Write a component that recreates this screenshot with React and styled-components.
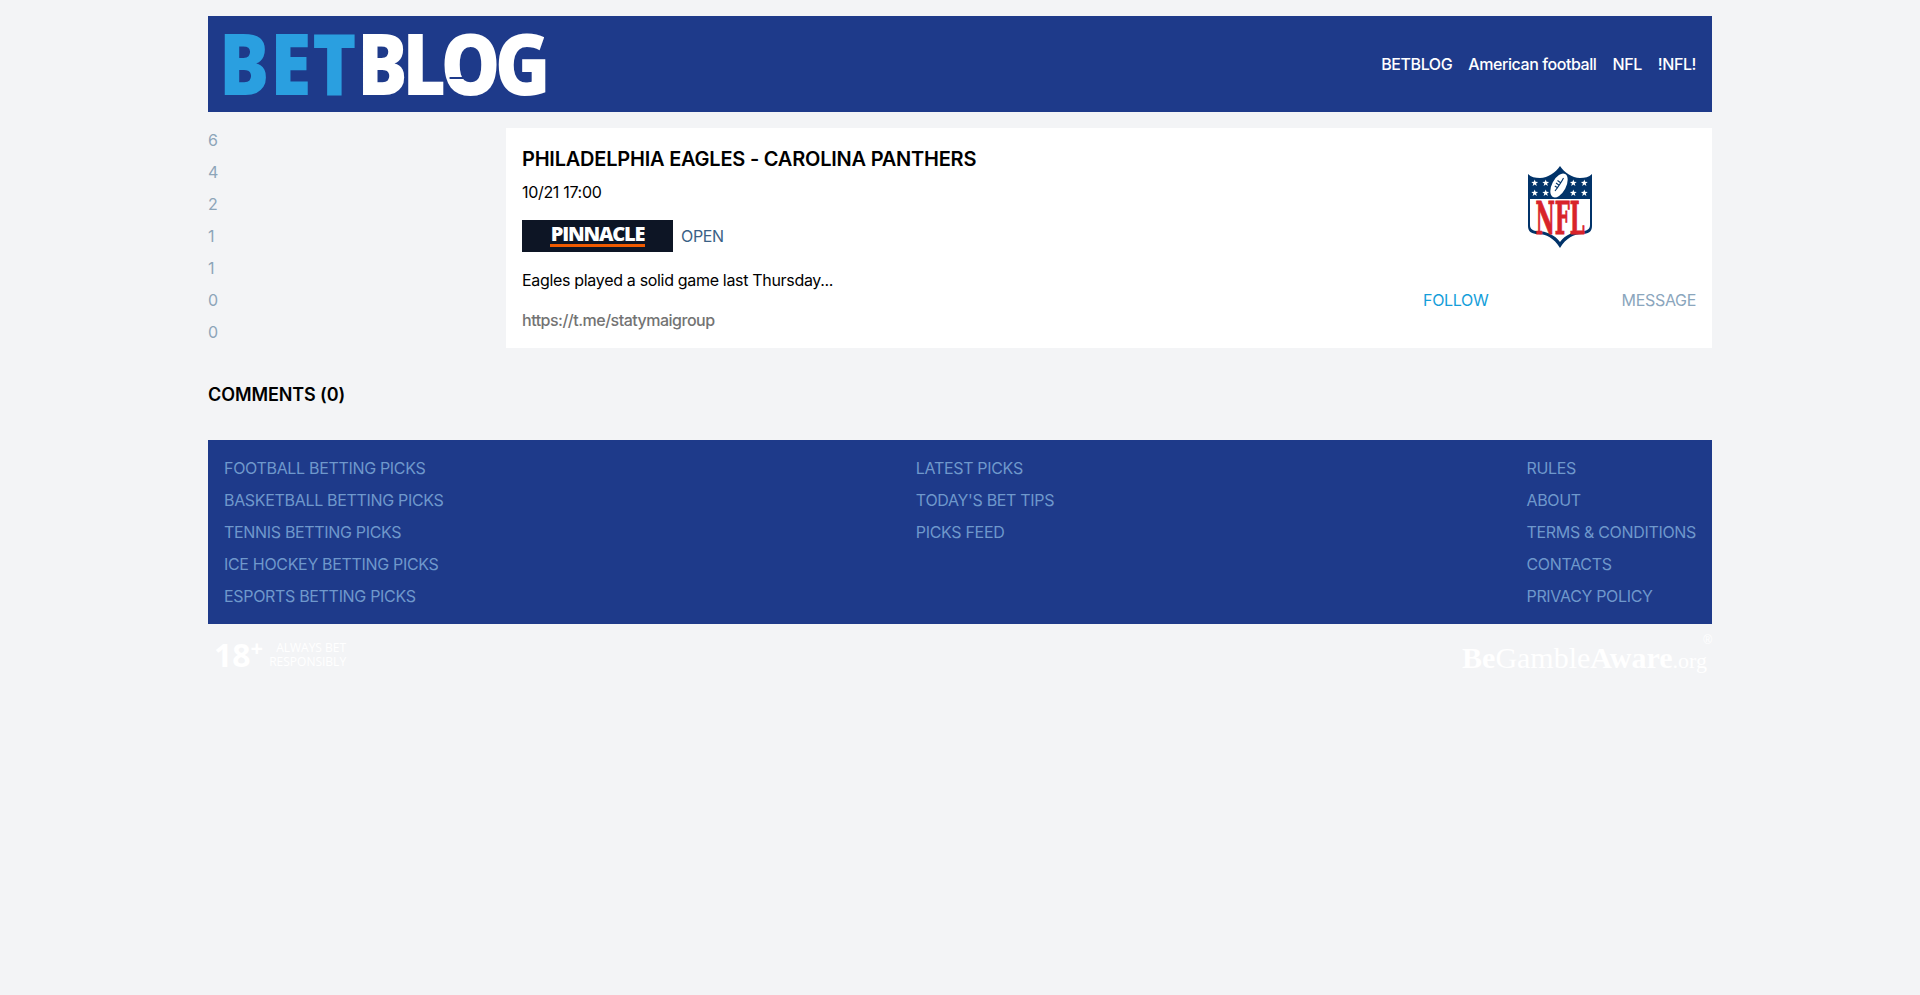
import styled, { createGlobalStyle } from 'styled-components';

const GlobalStyle = createGlobalStyle`
    * { box-sizing: border-box; }
    html, body { margin: 0; padding: 0; }
    body {
        background-color: #f3f4f6;
        color: #000;
        font-family: Inter, "Liberation Sans", sans-serif;
        font-size: 16px;
        line-height: 24px;
        letter-spacing: -0.32px;
    }
`

const stats = [6, 4, 2, 1, 1, 0, 0]
const navItems = ['BETBLOG', 'American football', 'NFL', '!NFL!']
const footerColumns = [
    ['FOOTBALL BETTING PICKS', 'BASKETBALL BETTING PICKS', 'TENNIS BETTING PICKS', 'ICE HOCKEY BETTING PICKS', 'ESPORTS BETTING PICKS'],
    ['LATEST PICKS', "TODAY'S BET TIPS", 'PICKS FEED'],
    ['RULES', 'ABOUT', 'TERMS & CONDITIONS', 'CONTACTS', 'PRIVACY POLICY'],
]
const starSpots = [[6.7, 17], [17.7, 17], [45.3, 17], [56.3, 17], [6.7, 27], [17.7, 27], [45.3, 27], [56.3, 27]]

const starPoints = (cx, cy, r) => {
    const pts = []
    for (let i = 0; i < 10; i++) {
        const rad = i % 2 === 0 ? r : r * 0.4
        const a = -Math.PI / 2 + (i * Math.PI) / 5
        pts.push(`${(cx + rad * Math.cos(a)).toFixed(2)},${(cy + rad * Math.sin(a)).toFixed(2)}`)
    }
    return pts.join(' ')
}

const NflLogo = () => (
    <svg width="64" height="82" viewBox="0 0 64 82">
        <path fill="#013369" d="M32 0C28 6 20 12 12 12C7 12 3 11 0 8V60C0 66 4 68 10 68C18 68 26 72 32 82C38 72 46 68 54 68C60 68 64 66 64 60V8C61 11 57 12 52 12C44 12 36 6 32 0Z" />
        <path fill="#fff" d="M2 33H62V59C62 63 59 65 54 65C46 65 37 69 32 76C27 69 18 65 10 65C5 65 2 63 2 59Z" />
        {starSpots.map(([x, y]) => <polygon key={`${x}-${y}`} fill="#fff" points={starPoints(x, y, 3.6)} />)}
        <ellipse cx="31" cy="19.5" rx="7" ry="13" fill="#fff" transform="rotate(28 31 19.5)" />
        <path d="M27 25C30 21 33 17 35.5 12M29.5 14.5L33 17M28 17L31.5 19.5M26.8 20L30 22" stroke="#013369" strokeWidth="1.1" fill="none" />
        <text transform="translate(32 68) scale(0.47 1)" fill="#d8232a" stroke="#d8232a" strokeWidth="1" fontFamily="'DejaVu Serif', serif" fontWeight="700" fontSize="45" textAnchor="middle" letterSpacing="0">NFL</text>
    </svg>
)

export default function App() {
    return (
        <>
            <GlobalStyle />
            <Page>
                <Header>
                    <Logo>
                        <LogoBet>BET</LogoBet><span>BLOG</span>
                        <LogoSlit />
                    </Logo>
                    <Nav>
                        {navItems.map(item => <NavLink key={item}>{item}</NavLink>)}
                    </Nav>
                </Header>
                <Main>
                    <Sidebar>
                        {stats.map((n, i) => <Stat key={i}>{n}</Stat>)}
                    </Sidebar>
                    <Card>
                        <CardBody>
                            <Title>PHILADELPHIA EAGLES - CAROLINA PANTHERS</Title>
                            <DateLine>10/21 17:00</DateLine>
                            <BookmakerRow>
                                <Pinnacle><PinnacleName>PINNACLE</PinnacleName></Pinnacle>
                                <OpenLink>OPEN</OpenLink>
                            </BookmakerRow>
                            <Teaser>Eagles played a solid game last Thursday...</Teaser>
                            <Url>https://t.me/statymaigroup</Url>
                        </CardBody>
                        <Author>
                            <AuthorLogo><NflLogo /></AuthorLogo>
                            <Actions>
                                <ActionLink $primary>FOLLOW</ActionLink>
                                <ActionLink>MESSAGE</ActionLink>
                            </Actions>
                        </Author>
                    </Card>
                </Main>
                <CommentsTitle>COMMENTS (0)</CommentsTitle>
                <Footer>
                    {footerColumns.map(col => (
                        <FooterColumn key={col[0]}>
                            {col.map(link => <FooterLink key={link}>{link}</FooterLink>)}
                        </FooterColumn>
                    ))}
                </Footer>
                <Badges>
                    <AgeBadge>
                        <AgeMark>18<sup>+</sup></AgeMark>
                        <AgeNote>ALWAYS BET<br />RESPONSIBLY</AgeNote>
                    </AgeBadge>
                    <Aware>
                        <b>Be</b>Gamble<b>Aware</b><AwareOrg>.org</AwareOrg>
                        <AwareMark>®</AwareMark>
                    </Aware>
                </Badges>
            </Page>
        </>
    )
}

const Page = styled.div`
    width: 1504px;
    margin: 0 auto;
    padding-top: 16px;
`

const Header = styled.header`
    height: 96px;
    padding: 0 16px;
    display: flex;
    align-items: center;
    justify-content: space-between;
    background-color: #1e3a8a;
`

const Logo = styled.div`
    position: relative;
    display: flex;
    margin: 0 0 4px -5px;
    color: #fff;
    font-family: "Open Sans", sans-serif;
    font-weight: 800;
    font-size: 85px;
    line-height: 96px;
    letter-spacing: -6px;
    transform: scaleX(0.88);
    transform-origin: left center;
`

const LogoBet = styled.span`
    color: #2a9fe0;
    letter-spacing: 1px;
`

const LogoSlit = styled.i`
    position: absolute;
    left: 262px;
    top: 63px;
    width: 16px;
    height: 2px;
    background-color: #1e3a8a;
`

const Nav = styled.nav`
    display: flex;
    gap: 16px;
`

const NavLink = styled.a`
    color: #fff;
    font-weight: 500;
    letter-spacing: -0.42px;
`

const Main = styled.main`
    display: flex;
    margin-top: 16px;
    align-items: flex-start;
`

const Sidebar = styled.aside`
    width: 298px;
    flex: none;
    margin-top: -4px;
`

const Stat = styled.div`
    height: 32px;
    line-height: 32px;
    color: #8da5b9;
`

const Card = styled.article`
    flex: 1;
    display: flex;
    justify-content: space-between;
    padding: 17px 16px 16px;
    background-color: #fff;
`

const CardBody = styled.div`
    display: flex;
    flex-direction: column;
`

const Title = styled.h1`
    margin: 0 0 7px;
    font-size: 20px;
    line-height: 28px;
    font-weight: 600;
    letter-spacing: -0.22px;
`

const DateLine = styled.div`
    margin-bottom: 16px;
`

const BookmakerRow = styled.div`
    display: flex;
    align-items: center;
    gap: 8px;
    margin-bottom: 16px;
`

const Pinnacle = styled.div`
    width: 151px;
    height: 32px;
    display: flex;
    justify-content: center;
    background-color: #0d1525;
`

const PinnacleName = styled.span`
    width: 95px;
    height: 23px;
    margin-top: 4px;
    border-bottom: 3px solid #f05a00;
    color: #fff;
    font-family: "Open Sans", sans-serif;
    font-size: 20px;
    font-weight: 800;
    line-height: 19px;
    letter-spacing: -1.2px;
    text-align: center;
`

const OpenLink = styled.a`
    color: #3b6186;
`

const Teaser = styled.p`
    margin: 0 0 16px;
`

const Url = styled.div`
    color: #737373;
    font-weight: 500;
    letter-spacing: -0.5px;
`

const Author = styled.div`
    width: 273px;
    display: flex;
    flex-direction: column;
    justify-content: space-between;
`

const AuthorLogo = styled.div`
    display: flex;
    justify-content: center;
    padding-top: 21px;

    svg { display: block; }
`

const Actions = styled.div`
    display: flex;
    justify-content: space-between;
    margin-bottom: 20px;
`

const ActionLink = styled.a`
    color: ${props => props.$primary ? '#149eda' : '#8ba6bd'};
`

const CommentsTitle = styled.h2`
    margin: 0;
    padding-top: 33px;
    height: 92px;
    font-size: 18px;
    line-height: 28px;
    font-weight: 600;
    letter-spacing: -0.1px;
`

const Footer = styled.footer`
    display: flex;
    justify-content: space-between;
    padding: 12px 16px;
    background-color: #1e3a8a;
`

const FooterColumn = styled.div`
    display: flex;
    flex-direction: column;
`

const FooterLink = styled.a`
    height: 32px;
    line-height: 32px;
    color: #6f98cc;
`

const Badges = styled.div`
    display: flex;
    justify-content: space-between;
    align-items: flex-start;
    color: #fff;
`

const AgeBadge = styled.div`
    display: flex;
    align-items: center;
    gap: 6px;
    padding: 11px 0 0 6px;
    font-family: "Open Sans", sans-serif;
`

const AgeMark = styled.div`
    font-size: 32px;
    line-height: 40px;
    font-weight: 700;
    letter-spacing: 0;

    sup {
        font-size: 22px;
        line-height: 0;
        vertical-align: 11px;
    }
`

const AgeNote = styled.div`
    font-size: 12px;
    line-height: 14px;
    letter-spacing: 0;
    text-align: right;
`

const Aware = styled.div`
    position: relative;
    padding: 17px 5px 0 0;
    font-family: "Liberation Serif", serif;
    font-size: 30px;
    line-height: 34px;
    letter-spacing: 0;
`

const AwareOrg = styled.span`
    font-size: 22px;
`

const AwareMark = styled.span`
    position: absolute;
    top: 10px;
    right: 0;
    font-family: "Liberation Sans", sans-serif;
    font-size: 12px;
    line-height: 12px;
`
